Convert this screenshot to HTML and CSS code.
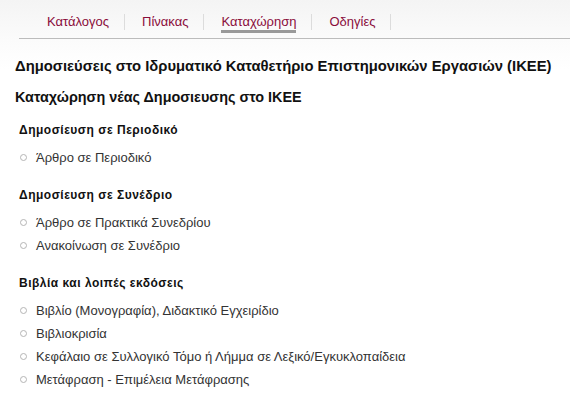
FILE: index.html
```html
<!DOCTYPE html>
<html lang="el">
<head>
<meta charset="utf-8">
<link rel="stylesheet" href="styles.css">
</head>
<body>
<div class="page">
  <nav class="nav">
    <ul class="tabs">
      <li class="tab"><a href="#">Κατάλογος</a></li>
      <li class="tab"><a href="#">Πίνακας</a></li>
      <li class="tab active"><a href="#">Καταχώρηση</a></li>
      <li class="tab"><a href="#">Οδηγίες</a></li>
    </ul>
  </nav>
  <main class="content">
    <h1 class="title">Δημοσιεύσεις στο Ιδρυματικό Καταθετήριο Επιστημονικών Εργασιών (ΙΚΕΕ)</h1>
    <h2 class="subtitle">Καταχώρηση νέας Δημοσιευσης στο ΙΚΕΕ</h2>

    <h3 class="section">Δημοσίευση σε Περιοδικό</h3>
    <ul class="list">
      <li>Άρθρο σε Περιοδικό</li>
    </ul>

    <h3 class="section">Δημοσίευση σε Συνέδριο</h3>
    <ul class="list">
      <li>Άρθρο σε Πρακτικά Συνεδρίου</li>
      <li>Ανακοίνωση σε Συνέδριο</li>
    </ul>

    <h3 class="section">Βιβλία και λοιπές εκδόσεις</h3>
    <ul class="list">
      <li>Βιβλίο (Μονογραφία), Διδακτικό Εγχειρίδιο</li>
      <li>Βιβλιοκρισία</li>
      <li>Κεφάλαιο σε Συλλογικό Τόμο ή Λήμμα σε Λεξικό/Εγκυκλοπαίδεια</li>
      <li>Μετάφραση - Επιμέλεια Μετάφρασης</li>
    </ul>
  </main>
</div>
</body>
</html>
```

FILE: styles.css
```css
html, body {
  margin: 0;
  padding: 0;
}
body {
  background: linear-gradient(to bottom, #f4f4f4 0px, #fbfbfb 40px, #ffffff 70px);
  background-repeat: no-repeat;
  background-color: #fff;
  font-family: "Liberation Sans", Arial, sans-serif;
  color: #222;
  min-height: 400px;
}
.page {
  width: 570px;
}
.nav {
  margin-left: 19px;
  border-bottom: 1px solid #bcbcbc;
  height: 38px;
}
.tabs {
  list-style: none;
  margin: 0;
  padding: 14px 0 0 10px;
  display: flex;
}
.tab {
  border-right: 1px solid #dcdcdc;
  height: 16px;
  padding: 0 15px 0 18px;
}
.tab + .tab {
  padding-left: 17px;
}
.tab a {
  display: block;
  font-size: 13px;
  line-height: 15px;
  color: #8a0c3b;
  text-decoration: none;
  position: relative;
}
.tab.active a::after {
  content: "";
  position: absolute;
  left: 0;
  right: 0;
  top: 16px;
  height: 3px;
  background: #999;
}
.content {
  padding: 0 0 0 15px;
}
.title {
  margin: 19px 0 0;
  font-size: 14.8px;
  line-height: 17px;
  font-weight: bold;
  color: #111;
  white-space: nowrap;
}
.subtitle {
  margin: 14px 0 0;
  font-size: 14.4px;
  line-height: 17px;
  font-weight: bold;
  color: #111;
}
.section {
  margin: 17px 0 0 4px;
  font-size: 12px;
  letter-spacing: 0.5px;
  line-height: 15px;
  font-weight: bold;
  color: #111;
}
.list {
  list-style: none;
  margin: 8px 0 19px;
  padding: 0;
}
.list li {
  display: flex;
  align-items: center;
  font-size: 13px;
  line-height: 15px;
  padding: 4px 0 4px 5px;
  color: #333;
}
.list li::before {
  content: "";
  width: 5px;
  height: 5px;
  border: 1px solid #b5b5b5;
  border-radius: 50%;
  margin-right: 9px;
  flex: none;
}
```
